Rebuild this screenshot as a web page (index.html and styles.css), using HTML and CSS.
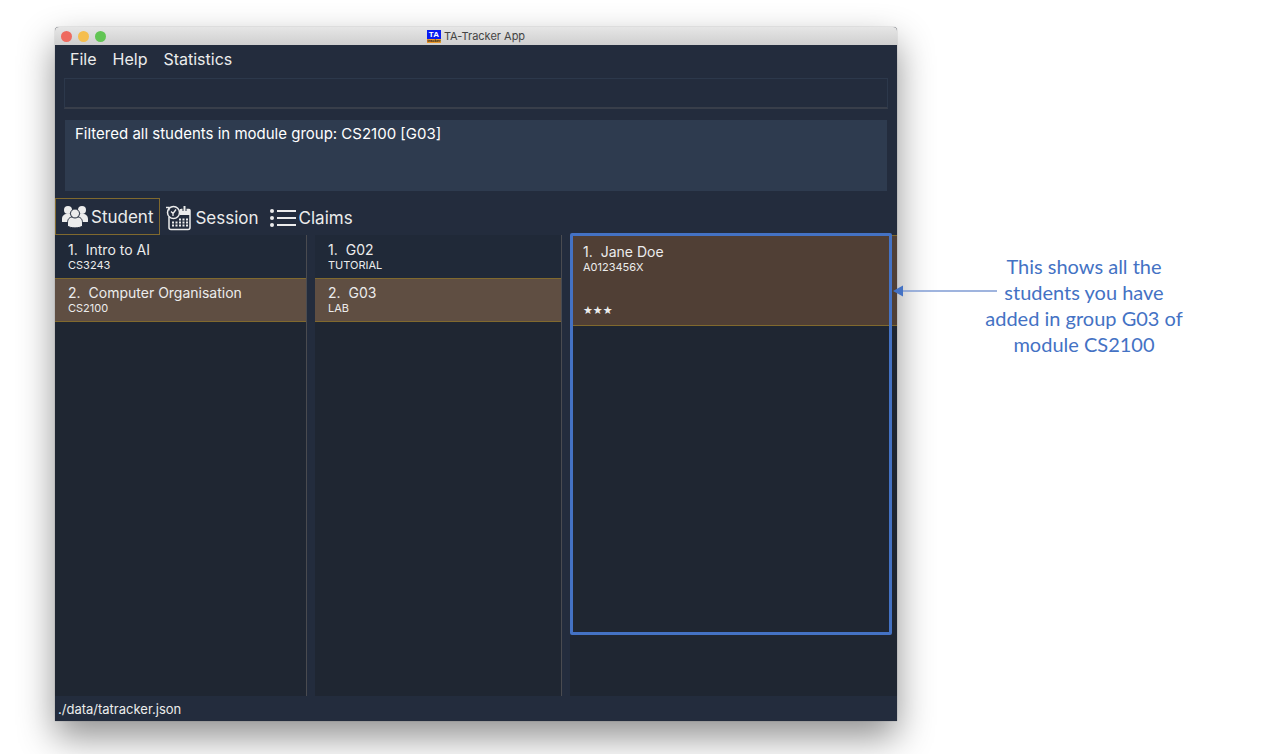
FILE: index.html
```html
<!DOCTYPE html>
<html lang="en">
<head>
<meta charset="utf-8">
<title>TA-Tracker App</title>
<link rel="stylesheet" href="styles.css">
</head>
<body>
<div class="page">
  <main class="window">
    <header class="titlebar">
      <div class="lights">
        <button class="light close" type="button" aria-label="Close"></button>
        <button class="light minimise" type="button" aria-label="Minimise"></button>
        <button class="light zoom" type="button" aria-label="Zoom"></button>
      </div>
      <h1 class="title">
        <span class="logo" aria-hidden="true"><span class="logo-top">TA</span><span class="logo-bottom">tracker</span></span>
        TA-Tracker App
      </h1>
    </header>
    <nav class="menu">
      <button type="button">File</button>
      <button type="button">Help</button>
      <button type="button">Statistics</button>
    </nav>
    <input class="command" type="text" aria-label="Command">
    <output class="result">Filtered all students in module group: CS2100 [G03]</output>
    <div class="tabs" role="tablist">
      <button class="tab active" type="button" role="tab" aria-selected="true">
        <svg width="26" height="24" viewBox="0 0 26 24" fill="#ececec">
          <circle cx="6" cy="5" r="4"/><circle cx="20" cy="5" r="4"/>
          <path d="M0 16v-2c0-3 2-5 5-5h4v8H1c-1 0-1 0-1-1zM26 16v-2c0-3-2-5-5-5h-4v8h8c1 0 1 0 1-1z"/>
          <g stroke="#232c3d" stroke-width="1">
            <path d="M5.500 21v-3c0-4 2-6 5-6h5c3 0 5 2 5 6v3c-3 2.500-12 2.500-15 0z"/>
            <circle cx="13" cy="8.500" r="4.500"/>
          </g>
        </svg>
        Student
      </button>
      <button class="tab" type="button" role="tab" aria-selected="false">
        <svg width="26" height="26" viewBox="0 0 26 26" fill="none" stroke="#ececec" stroke-width="1.500">
          <path d="M3 12v10.500q0 2 2 2h17q2 0 2-2V5.500q0-1-1-1h-8"/>
          <path d="M14 4h10v6H14z" fill="#ececec" stroke="none"/>
          <path d="M18.500 1v5" stroke="#232c3d" stroke-width="4"/>
          <path d="M18.500 1v5" stroke-width="2"/>
          <circle cx="7.500" cy="7.500" r="6" fill="#232c3d"/>
          <path d="M7 8.500l3-4M7 8.500L5 6.500M7 8v3M0 2.500h3v3" stroke-width="1.300"/>
          <path d="M13 14.500h9M6 17.500h16M6 20.500h16" stroke-width="2" stroke-dasharray="2 1.500"/>
        </svg>
        Session
      </button>
      <button class="tab" type="button" role="tab" aria-selected="false">
        <svg width="26" height="20" viewBox="0 0 26 20" fill="#ececec">
          <circle cx="2" cy="3" r="2"/><circle cx="2" cy="10" r="2"/><circle cx="2" cy="17" r="2"/>
          <path d="M7 2h19v2H7zM7 9h19v2H7zM7 16h19v2H7z"/>
        </svg>
        Claims
      </button>
    </div>
    <div class="panels">
      <ul class="panel ruled">
        <li class="item"><p class="name"><span>1.</span>Intro to AI</p><p class="detail">CS3243</p></li>
        <li class="item selected"><p class="name"><span>2.</span>Computer Organisation</p><p class="detail">CS2100</p></li>
      </ul>
      <ul class="panel ruled">
        <li class="item"><p class="name"><span>1.</span>G02</p><p class="detail">TUTORIAL</p></li>
        <li class="item selected"><p class="name"><span>2.</span>G03</p><p class="detail">LAB</p></li>
      </ul>
      <div class="students">
        <ul class="panel">
          <li class="item student"><p class="name"><span>1.</span>Jane Doe</p><p class="detail">A0123456X</p><p class="stars">★★★</p></li>
        </ul>
        <div class="highlight"></div>
      </div>
    </div>
    <footer class="status">./data/tatracker.json</footer>
  </main>
  <aside class="note">
    <svg class="arrow" width="104" height="12" viewBox="0 0 104 12">
      <path d="M9 6h95" stroke="#7f9bd3" stroke-width="1.500"/>
      <path d="M0 6l10-5.500v11z" fill="#4472c4"/>
    </svg>
    <p class="note-text">This shows all the<br>students you have<br>added in group G03 of<br>module CS2100</p>
  </aside>
</div>
</body>
</html>
```

FILE: styles.css
```css
* { box-sizing: border-box; }
body {
  margin: 0;
  background: #fff;
  font-family: Inter, "Liberation Sans", sans-serif;
  color: #ececec;
}
h1, p, ul { margin: 0; padding: 0; }
ul { list-style: none; }
button { border: 0; padding: 0; background: none; color: inherit; font: inherit; }

.page {
  display: grid;
  grid-template-columns: minmax(0, 1fr) 367px;
  min-height: 100vh;
  padding: 27px 0 33px 55px;
  overflow: hidden;
}
.window {
  display: flex;
  flex-direction: column;
  border-radius: 4px 4px 0 0;
  background: #232c3d;
  box-shadow: 0 0 1px rgba(0, 0, 0, 0.6), 0 16px 36px rgba(0, 0, 0, 0.44);
}

.titlebar {
  display: grid;
  grid-template-columns: 1fr auto 1fr;
  align-items: center;
  height: 18px;
  padding: 0 6px;
  border-radius: 4px 4px 0 0;
  background: linear-gradient(#e6e6e6, #cfcfcf);
}
.lights { display: flex; gap: 6px; }
.light { width: 11px; height: 11px; border-radius: 50%; }
.close { background: #ee6a5f; }
.minimise { background: #f5be4f; }
.zoom { background: #62c554; }
.title {
  display: flex;
  align-items: center;
  gap: 3px;
  font-size: 11px;
  line-height: 16px;
  font-weight: 400;
  color: #444;
}
.logo {
  display: flex;
  flex-direction: column;
  width: 14px;
  height: 13px;
  overflow: hidden;
  text-align: center;
  font-family: "Liberation Sans", sans-serif;
  font-weight: 700;
}
.logo-top { height: 9px; background: #0a1cf0; color: #fff; font-size: 8px; line-height: 9px; }
.logo-bottom { height: 4px; background: #ee9a2c; color: #222; font-size: 4px; line-height: 4px; }

.menu { display: flex; gap: 16px; padding: 4px 15px; font-size: 16px; line-height: 20px; }
.command {
  height: 31px;
  margin: 5px 9px 0;
  border: 1px solid #2c384b;
  border-bottom: 2px solid #383e4a;
  background: transparent;
  color: inherit;
  font: inherit;
}
.result {
  display: block;
  height: 71px;
  margin: 11px 10px 0;
  padding: 4px 10px;
  background: #2e3b4f;
  color: #fff;
  font-size: 15px;
  line-height: 20px;
}
.tabs { display: flex; margin-top: 7px; font-size: 17px; line-height: 24px; }
.tab {
  display: flex;
  align-items: center;
  gap: 3px;
  height: 37px;
  padding: 2px 4px 0 5px;
  border: 1px solid transparent;
}
.tab.active { padding: 0 6px; border-color: #80692e; }

.panels {
  display: grid;
  grid-template-columns: 252fr 247fr 327fr;
  gap: 8px;
  flex: 1;
}
.panel { background: #1f2632; }
.ruled { border-right: 1px solid #4a4b50; }
.item { padding: 6px 13px; background: #202938; }
.name { display: flex; gap: 8px; font-size: 14px; line-height: 18px; }
.detail { font-size: 11px; line-height: 13px; }
.selected, .student { border: solid #80692e; border-width: 1px 0; }
.selected { padding-top: 5px; background: #5f4e42; }
.students { position: relative; display: grid; }
.student { padding: 7px 13px 5px; background: #503f35; }
.stars {
  margin-top: 28px;
  font-family: "DejaVu Sans", sans-serif;
  font-size: 11px;
  line-height: 18px;
}
.highlight {
  position: absolute;
  inset: -2px 5px 61px 0;
  border: 3px solid #4472c4;
  border-radius: 2px;
}
.status { padding: 5px 3px 4px; font-size: 13px; line-height: 16px; }

.note {
  display: flex;
  align-items: flex-start;
  z-index: 1;
  margin-left: -4px;
  padding-top: 226px;
  color: #4472c4;
}
.arrow { flex: none; margin-top: 32px; }
.note-text {
  flex: none;
  width: 204px;
  margin-left: -15px;
  font-family: Lato, "Open Sans", sans-serif;
  font-size: 20px;
  line-height: 26px;
  text-align: center;
}
```
